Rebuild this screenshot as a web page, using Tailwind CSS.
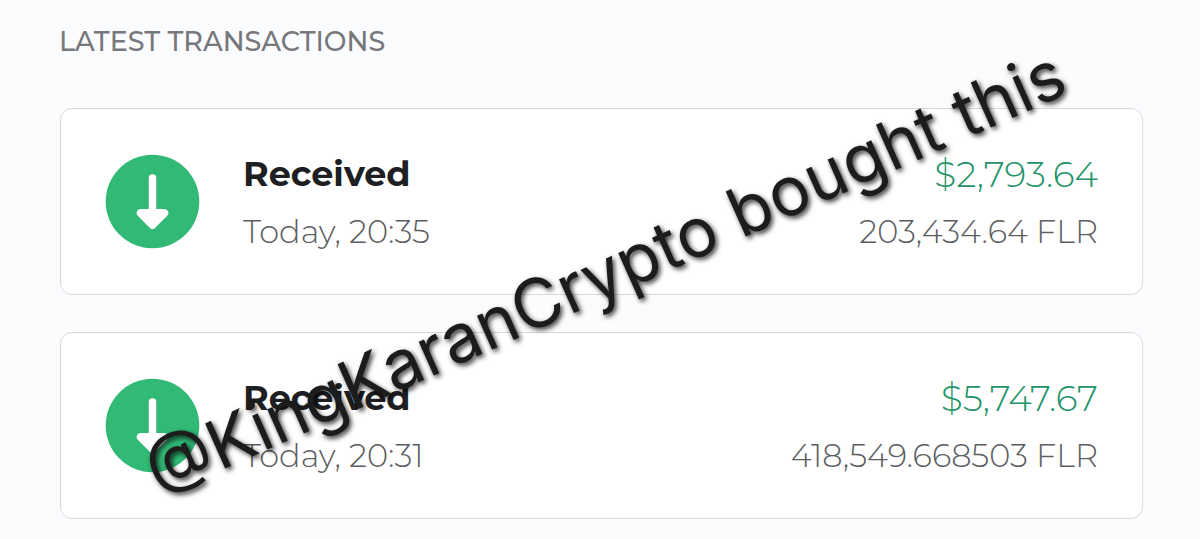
<!DOCTYPE html>
<html lang="en">
<head>
<meta charset="utf-8">
<meta name="viewport" content="width=device-width, initial-scale=1">
<title>Latest transactions</title>
<script src="https://cdn.jsdelivr.net/npm/@tailwindcss/browser@4"></script>
</head>
<body class="relative min-h-screen overflow-hidden bg-[#fbfcfe] font-[Montserrat,Inter,sans-serif]">
<main class="flex flex-col pt-6 pr-[57px] pb-5 pl-[59px]">
  <h1 class="text-[27px] leading-9 font-medium text-[#77787b] uppercase">Latest transactions</h1>
  <ul class="mt-12 ml-px flex flex-col gap-[37px]">
    <li class="flex items-center gap-[42px] rounded-xl border border-[#d6dade] bg-white px-11 py-[38px]">
      <svg class="size-24 shrink-0" viewBox="0 0 96 96" aria-hidden="true">
        <circle cx="47.500" cy="47.500" r="46.800" fill="#31b975"/>
        <path d="M47.500 24V62" stroke="#fff" stroke-width="7.500" stroke-linecap="round"/>
        <path d="M36 55H59C63 55 65 59 62 62L50 74Q47.500 76.500 45 74L33 62C30 59 32 55 36 55Z" fill="#fff"/>
      </svg>
      <div class="flex flex-1 flex-col gap-[7px]">
        <h2 class="text-[35px] leading-[54px] font-bold text-[#1d1f23]">Received</h2>
        <p class="text-[32px] leading-[48px] font-light text-[#5c5e61]">Today, 20:35</p>
      </div>
      <div class="flex flex-col gap-[7px] text-right">
        <p class="text-[36px] leading-[54px] font-light text-[#239468]">$2,793.64</p>
        <p class="text-[32px] leading-[48px] font-light text-[#5c5e61]">203,434.64 FLR</p>
      </div>
    </li>
    <li class="flex items-center gap-[42px] rounded-xl border border-[#d6dade] bg-white px-11 py-[38px]">
      <svg class="size-24 shrink-0" viewBox="0 0 96 96" aria-hidden="true">
        <circle cx="47.500" cy="47.500" r="46.800" fill="#31b975"/>
        <path d="M47.500 24V62" stroke="#fff" stroke-width="7.500" stroke-linecap="round"/>
        <path d="M36 55H59C63 55 65 59 62 62L50 74Q47.500 76.500 45 74L33 62C30 59 32 55 36 55Z" fill="#fff"/>
      </svg>
      <div class="flex flex-1 flex-col gap-[7px]">
        <h2 class="text-[35px] leading-[54px] font-bold text-[#1d1f23]">Received</h2>
        <p class="text-[32px] leading-[48px] font-light text-[#5c5e61]">Today, 20:31</p>
      </div>
      <div class="flex flex-col gap-[7px] text-right">
        <p class="text-[36px] leading-[54px] font-light text-[#239468]">$5,747.67</p>
        <p class="text-[32px] leading-[48px] font-light text-[#5c5e61]">418,549.668503 FLR</p>
      </div>
    </li>
  </ul>
</main>
<p class="pointer-events-none absolute top-[272px] left-[605px] -translate-x-1/2 -translate-y-1/2 -rotate-24 font-[Inter,sans-serif] text-[68px] leading-none whitespace-nowrap text-[#1c1c1c] [text-shadow:1px_3px_5px_rgb(0_0_0/0.8)]">@KingKaranCrypto bought this</p>
</body>
</html>
